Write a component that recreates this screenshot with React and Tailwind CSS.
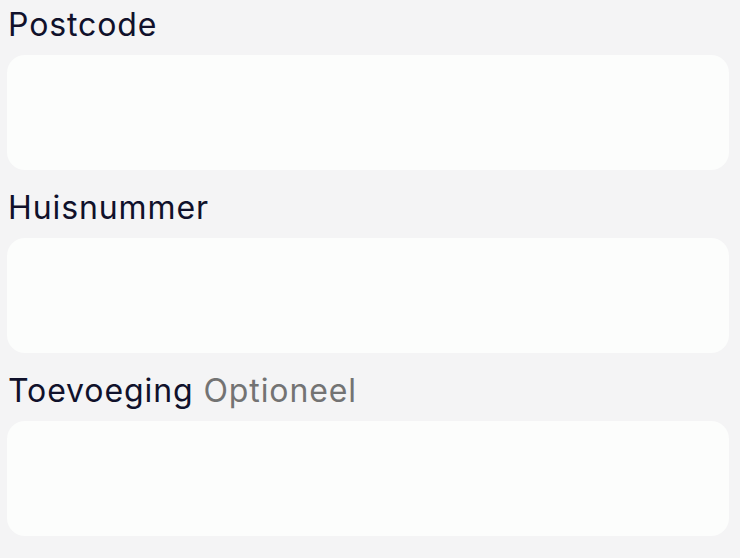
import React from 'react';

const Field = ({ label, optional }) => (
    <div className="flex flex-col">
        <label className="h-[42px] mb-[13px] pl-[1px] pt-[9px] flex items-start text-[32px] leading-none text-[#10112b] tracking-[0.9px]">
            {label}
            {optional && <span className="ml-[10px] text-[#737373]">{optional}</span>}
        </label>
        <input type="text" className="h-[115px] w-full rounded-[18px] bg-[#fcfdfc] outline-none px-5 text-[28px]" />
    </div>
);

export default function App() {
    return (
        <div className="w-[740px] h-[558px] bg-[#f4f4f5] px-[7px] pr-[11px] flex flex-col gap-[13px]" style={{ fontFamily: 'Inter, "Noto Sans", sans-serif' }}>
            <Field label="Postcode" />
            <Field label="Huisnummer" />
            <Field label="Toevoeging" optional="Optioneel" />
        </div>
    );
}
